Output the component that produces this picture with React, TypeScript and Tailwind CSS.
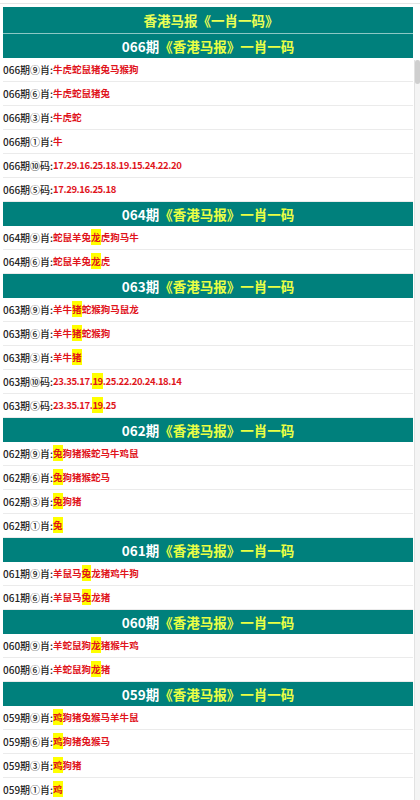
import type { FunctionComponent } from "react";

interface Row {
  label: string;
  value: string;
}
interface Issue {
  no: string;
  rows: Row[];
}

// [x] marks the highlighted part
const issues: Issue[] = [
  {
    no: "066",
    rows: [
      { label: "⑨肖", value: "牛虎蛇鼠猪兔马猴狗" },
      { label: "⑥肖", value: "牛虎蛇鼠猪兔" },
      { label: "③肖", value: "牛虎蛇" },
      { label: "①肖", value: "牛" },
      { label: "⑩码", value: "17.29.16.25.18.19.15.24.22.20" },
      { label: "⑤码", value: "17.29.16.25.18" },
    ],
  },
  {
    no: "064",
    rows: [
      { label: "⑨肖", value: "蛇鼠羊兔[龙]虎狗马牛" },
      { label: "⑥肖", value: "蛇鼠羊兔[龙]虎" },
    ],
  },
  {
    no: "063",
    rows: [
      { label: "⑨肖", value: "羊牛[猪]蛇猴狗马鼠龙" },
      { label: "⑥肖", value: "羊牛[猪]蛇猴狗" },
      { label: "③肖", value: "羊牛[猪]" },
      { label: "⑩码", value: "23.35.17.[19].25.22.20.24.18.14" },
      { label: "⑤码", value: "23.35.17.[19].25" },
    ],
  },
  {
    no: "062",
    rows: [
      { label: "⑨肖", value: "[兔]狗猪猴蛇马牛鸡鼠" },
      { label: "⑥肖", value: "[兔]狗猪猴蛇马" },
      { label: "③肖", value: "[兔]狗猪" },
      { label: "①肖", value: "[兔]" },
    ],
  },
  {
    no: "061",
    rows: [
      { label: "⑨肖", value: "羊鼠马[兔]龙猪鸡牛狗" },
      { label: "⑥肖", value: "羊鼠马[兔]龙猪" },
    ],
  },
  {
    no: "060",
    rows: [
      { label: "⑨肖", value: "羊蛇鼠狗[龙]猪猴牛鸡" },
      { label: "⑥肖", value: "羊蛇鼠狗[龙]猪" },
    ],
  },
  {
    no: "059",
    rows: [
      { label: "⑨肖", value: "[鸡]狗猪兔猴马羊牛鼠" },
      { label: "⑥肖", value: "[鸡]狗猪兔猴马" },
      { label: "③肖", value: "[鸡]狗猪" },
      { label: "①肖", value: "[鸡]" },
    ],
  },
];

const Value: FunctionComponent<{ text: string }> = ({ text }) => {
  const parts = text.split(/(\[[^\]]+\])/).filter(Boolean);
  const isCode = /\d/.test(text);
  return (
    <span
      className={
        isCode
          ? "text-[9.5px] font-bold tracking-[-0.4px] text-[#e0141c]"
          : "text-[9.5px] font-bold text-[#e0141c]"
      }
    >
      {parts.map((p, i) =>
        p.startsWith("[") ? (
          <span key={i} className="bg-[#ffff00] py-[1px]">
            {p.slice(1, -1)}
          </span>
        ) : (
          <span key={i}>{p}</span>
        )
      )}
    </span>
  );
};

export default function App() {
  return (
    <div
      className="mt-[3px] min-h-[800px] overflow-hidden border-t border-[#e6e6e6] bg-white"
      style={{ fontFamily: '"Noto Sans CJK SC", "Noto Sans", sans-serif' }}
    >
      <div className="flex pl-[3px] pt-[3px]">
        <div className="flex-1">
          <div className="flex h-[27px] items-center justify-center border-b border-[#8cc8c4] bg-[#00807c] pl-[6px] text-[13.5px] font-bold text-[#eaff55]">
            香港马报《一肖一码》
          </div>
          {issues.map((issue) => (
            <div key={issue.no}>
              <div className="flex h-[24px] items-center justify-center bg-[#00807c] text-[13.5px] font-bold">
                <span className="text-white">{issue.no}期</span>
                <span className="text-[#eaff44]">《香港马报》一肖一码</span>
              </div>
              {issue.rows.map((row, i) => (
                <div
                  key={i}
                  className="flex h-[24px] items-center border-b border-[#ebebeb] leading-none"
                >
                  <span className="text-[10px] font-medium text-[#222]">
                    {issue.no}期{row.label}:
                  </span>
                  <Value text={row.value} />
                </div>
              ))}
            </div>
          ))}
        </div>
        <div className="ml-[1px] w-[6px] shrink-0 pt-[49px]">
          <div className="h-[760px] border-l border-[#e2e2e2] bg-[#f4f4f4]">
            <div className="mt-[4px] h-[24px] rounded-full bg-[#cfcfcf]" />
          </div>
        </div>
      </div>
    </div>
  );
}
